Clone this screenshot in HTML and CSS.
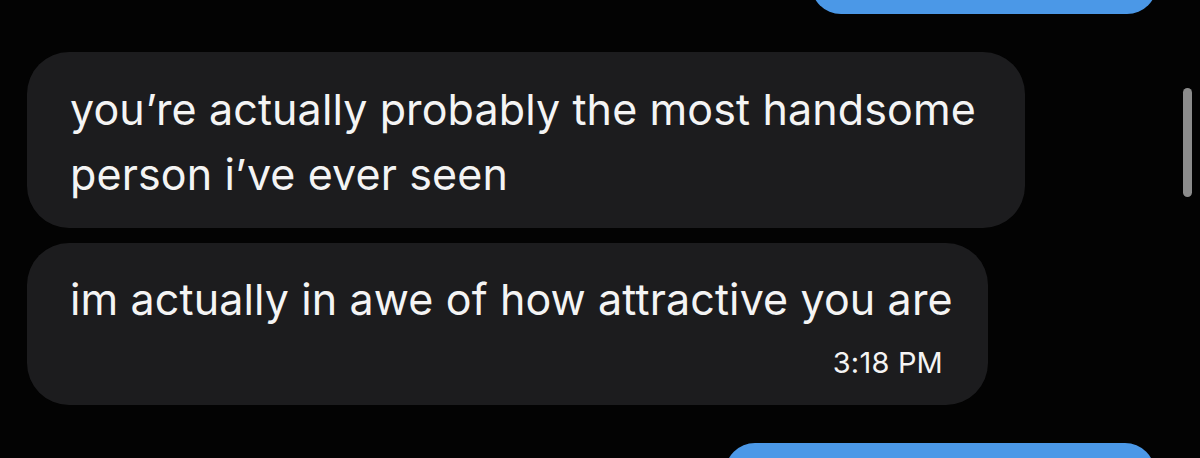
FILE: index.html
```html
<!DOCTYPE html>
<html lang="en">
<head>
<meta charset="utf-8">
<title>Messages</title>
<link rel="stylesheet" href="styles.css">
</head>
<body>
<main class="chat">
  <div class="bubble sent sent-top"></div>
  <div class="bubble received first">
    <p class="text">you’re actually probably the most handsome<br>person i’ve ever seen</p>
  </div>
  <div class="bubble received second">
    <p class="text">im actually in awe of how attractive you are</p>
    <span class="time">3:18 PM</span>
  </div>
  <div class="bubble sent sent-bottom"></div>
  <div class="scrollbar"></div>
</main>
</body>
</html>
```

FILE: styles.css
```css
* { box-sizing: border-box; }
html, body {
  margin: 0;
  padding: 0;
  background: #030303;
}
.chat {
  position: relative;
  width: 1200px;
  height: 458px;
  overflow: hidden;
  display: flex;
  flex-direction: column;
  font-family: Inter, "Noto Sans", "Liberation Sans", sans-serif;
  color: #f4f4f4;
}
.bubble {
  border-radius: 42px;
  flex-shrink: 0;
}
.sent {
  background: #4b98e7;
  height: 60px;
}
.sent-top {
  align-self: flex-end;
  margin-top: -46px;
  margin-right: 43px;
  width: 346px;
}
.received {
  background: #1c1c1e;
  align-self: flex-start;
  margin-left: 27px;
  display: flex;
  flex-direction: column;
}
.first {
  margin-top: 38px;
  padding: 25px 50px 21px 43px;
  width: 998px;
}
.second {
  margin-top: 15px;
  padding: 24px 43px 24px 43px;
  width: 961px;
}
.sent-bottom {
  align-self: flex-end;
  margin-top: 38px;
  margin-right: 45px;
  width: 430px;
}
.text {
  margin: 0;
  font-size: 43px;
  letter-spacing: 0.12px;
  line-height: 65px;
  white-space: nowrap;
}
.time {
  align-self: flex-end;
  margin-top: 13px;
  margin-right: 2px;
  font-size: 29px;
  line-height: 36px;
  letter-spacing: 0.2px;
}
.scrollbar {
  position: absolute;
  left: 1183px;
  top: 88px;
  width: 9px;
  height: 109px;
  border-radius: 5px;
  background: #8c8c8c;
}
```
